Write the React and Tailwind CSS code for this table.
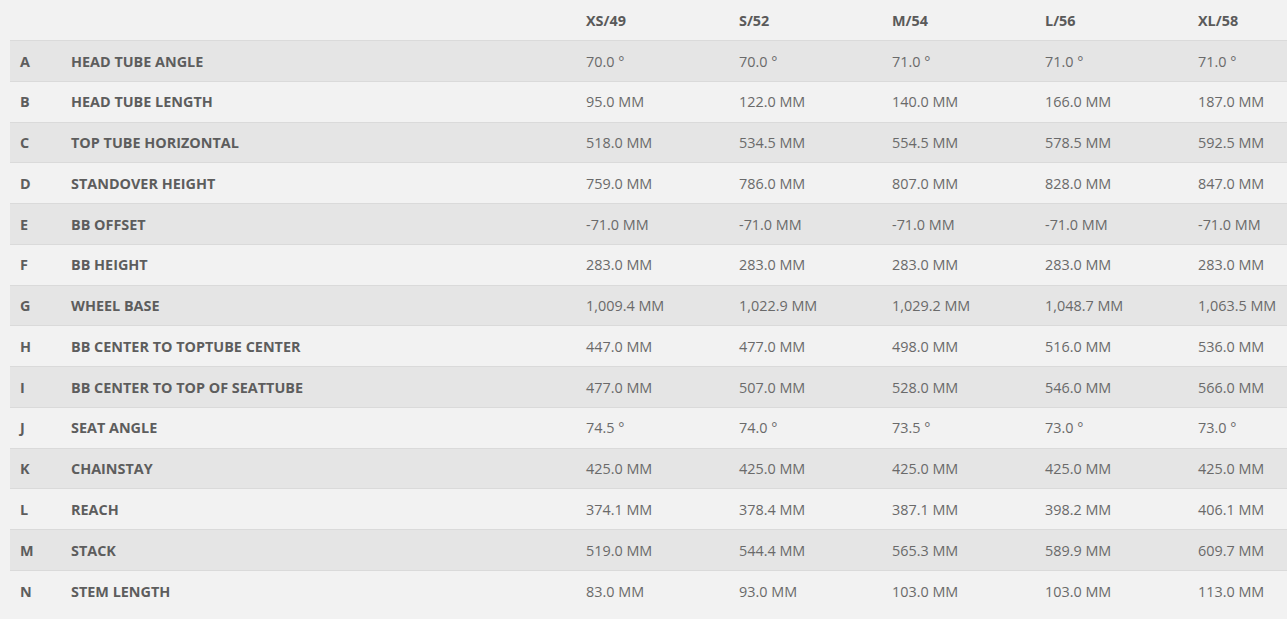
const sizes = ["XS/49", "S/52", "M/54", "L/56", "XL/58"];

const rows = [
  ["A", "Head Tube Angle", ["70.0 °", "70.0 °", "71.0 °", "71.0 °", "71.0 °"]],
  ["B", "Head Tube Length", ["95.0 MM", "122.0 MM", "140.0 MM", "166.0 MM", "187.0 MM"]],
  ["C", "Top Tube Horizontal", ["518.0 MM", "534.5 MM", "554.5 MM", "578.5 MM", "592.5 MM"]],
  ["D", "Standover Height", ["759.0 MM", "786.0 MM", "807.0 MM", "828.0 MM", "847.0 MM"]],
  ["E", "BB Offset", ["-71.0 MM", "-71.0 MM", "-71.0 MM", "-71.0 MM", "-71.0 MM"]],
  ["F", "BB Height", ["283.0 MM", "283.0 MM", "283.0 MM", "283.0 MM", "283.0 MM"]],
  ["G", "Wheel Base", ["1,009.4 MM", "1,022.9 MM", "1,029.2 MM", "1,048.7 MM", "1,063.5 MM"]],
  ["H", "BB Center to Toptube Center", ["447.0 MM", "477.0 MM", "498.0 MM", "516.0 MM", "536.0 MM"]],
  ["I", "BB Center to Top of Seattube", ["477.0 MM", "507.0 MM", "528.0 MM", "546.0 MM", "566.0 MM"]],
  ["J", "Seat Angle", ["74.5 °", "74.0 °", "73.5 °", "73.0 °", "73.0 °"]],
  ["K", "Chainstay", ["425.0 MM", "425.0 MM", "425.0 MM", "425.0 MM", "425.0 MM"]],
  ["L", "Reach", ["374.1 MM", "378.4 MM", "387.1 MM", "398.2 MM", "406.1 MM"]],
  ["M", "Stack", ["519.0 MM", "544.4 MM", "565.3 MM", "589.9 MM", "609.7 MM"]],
  ["N", "Stem Length", ["83.0 MM", "93.0 MM", "103.0 MM", "103.0 MM", "113.0 MM"]],
];

const cols = "grid grid-cols-[51px_515px_153px_153px_153px_153px_153px]";

export default function App() {
  return (
    <div className="h-[619px] w-[1287px] overflow-hidden bg-[#f2f2f2] pl-[10px] font-['Open_Sans',sans-serif] text-[14.4px]">
      <div className="w-[1331px]">
        <div className={`${cols} h-[40px] items-center`}>
          <div />
          <div />
          {sizes.map((s) => (
            <div key={s} className="px-[10px] pt-[1px] font-bold text-[#5a5a5a]">
              {s}
            </div>
          ))}
        </div>
        {rows.map(([letter, label, vals], i) => (
          <div
            key={letter}
            className={`${cols} h-[40.77px] items-center border-t border-[#dadada] pt-[1px] ${
              i % 2 === 0 ? "bg-[#e5e5e5]" : "bg-[#f2f2f2]"
            }`}
          >
            <div className="px-[10px] font-bold text-[#5d5d5d]">{letter}</div>
            <div className="px-[10px] font-bold uppercase text-[#5d5d5d]">{label}</div>
            {vals.map((v, j) => (
              <div key={j} className="whitespace-nowrap px-[10px] text-[#6a6a6a]">
                {v}
              </div>
            ))}
          </div>
        ))}
      </div>
    </div>
  );
}
